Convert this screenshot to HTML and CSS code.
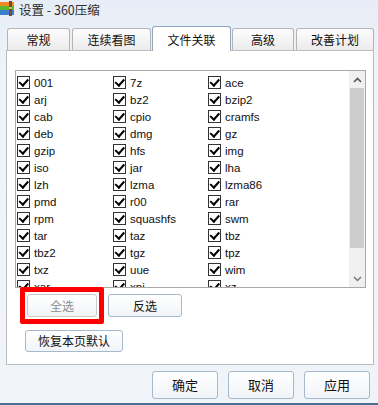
FILE: index.html
```html
<!DOCTYPE html>
<html lang="zh-CN">
<head>
    <meta charset="UTF-8">
    <title>设置 - 360压缩</title>
    <link rel="stylesheet" href="styles.css">
</head>
<body>
    <div class="window">
        <div class="titlebar">
            <svg class="app-icon" width="14" height="16" viewBox="0 0 14 16">
                <rect x="0" y="1" width="14" height="4" fill="#f08a24"/>
                <rect x="0" y="5" width="14" height="4" fill="#5cb82f"/>
                <rect x="0" y="9" width="14" height="5" fill="#3b7fd0"/>
                <rect x="9" y="0" width="3" height="15" fill="#7a4a22"/>
                <rect x="9" y="6" width="3" height="2" fill="#d9b36a"/>
            </svg>
            <span class="title">设置 - 360压缩</span>
        </div>

        <div class="tabs">
            <div class="tab w63">常规</div>
            <div class="tab w79">连续看图</div>
            <div class="tab w79 active">文件关联</div>
            <div class="tab w62">高级</div>
            <div class="tab w78">改善计划</div>
        </div>

        <div class="panel">
            <div class="listbox">
                <div class="items">
                    <label class="item"><span class="cb"></span>001</label>
                    <label class="item"><span class="cb"></span>7z</label>
                    <label class="item"><span class="cb"></span>ace</label>
                    <label class="item"><span class="cb"></span>arj</label>
                    <label class="item"><span class="cb"></span>bz2</label>
                    <label class="item"><span class="cb"></span>bzip2</label>
                    <label class="item"><span class="cb"></span>cab</label>
                    <label class="item"><span class="cb"></span>cpio</label>
                    <label class="item"><span class="cb"></span>cramfs</label>
                    <label class="item"><span class="cb"></span>deb</label>
                    <label class="item"><span class="cb"></span>dmg</label>
                    <label class="item"><span class="cb"></span>gz</label>
                    <label class="item"><span class="cb"></span>gzip</label>
                    <label class="item"><span class="cb"></span>hfs</label>
                    <label class="item"><span class="cb"></span>img</label>
                    <label class="item"><span class="cb"></span>iso</label>
                    <label class="item"><span class="cb"></span>jar</label>
                    <label class="item"><span class="cb"></span>lha</label>
                    <label class="item"><span class="cb"></span>lzh</label>
                    <label class="item"><span class="cb"></span>lzma</label>
                    <label class="item"><span class="cb"></span>lzma86</label>
                    <label class="item"><span class="cb"></span>pmd</label>
                    <label class="item"><span class="cb"></span>r00</label>
                    <label class="item"><span class="cb"></span>rar</label>
                    <label class="item"><span class="cb"></span>rpm</label>
                    <label class="item"><span class="cb"></span>squashfs</label>
                    <label class="item"><span class="cb"></span>swm</label>
                    <label class="item"><span class="cb"></span>tar</label>
                    <label class="item"><span class="cb"></span>taz</label>
                    <label class="item"><span class="cb"></span>tbz</label>
                    <label class="item"><span class="cb"></span>tbz2</label>
                    <label class="item"><span class="cb"></span>tgz</label>
                    <label class="item"><span class="cb"></span>tpz</label>
                    <label class="item"><span class="cb"></span>txz</label>
                    <label class="item"><span class="cb"></span>uue</label>
                    <label class="item"><span class="cb"></span>wim</label>
                    <label class="item"><span class="cb"></span>xar</label>
                    <label class="item"><span class="cb"></span>xpi</label>
                    <label class="item"><span class="cb"></span>xz</label>
                </div>
                <div class="scrollbar">
                    <div class="arrow">
                        <svg width="9" height="6" viewBox="0 0 9 6"><path d="M1 5 L4.5 1.5 L8 5" fill="none" stroke="#555" stroke-width="1.6"/></svg>
                    </div>
                    <div class="thumb"></div>
                    <div class="track"></div>
                    <div class="arrow">
                        <svg width="9" height="6" viewBox="0 0 9 6"><path d="M1 1 L4.5 4.5 L8 1" fill="none" stroke="#777" stroke-width="1.4"/></svg>
                    </div>
                </div>
            </div>

            <div class="btn-row">
                <span class="highlight">
                    <button class="btn select-all" disabled>全选</button>
                </span>
                <button class="btn invert">反选</button>
            </div>
            <button class="btn restore">恢复本页默认</button>
        </div>

        <div class="dialog-buttons">
            <button class="btn big">确定</button>
            <button class="btn big">取消</button>
            <button class="btn big">应用</button>
        </div>
        <div class="bottom-line"></div>
    </div>
</body>
</html>
```

FILE: styles.css
```css
* {
    box-sizing: border-box;
}
body {
    margin: 0;
    width: 378px;
    height: 405px;
    overflow: hidden;
    font-family: "Noto Sans CJK SC", sans-serif;
    font-size: 12px;
    color: #1a1a1a;
    background: #eef3f9;
}
.window {
    height: 405px;
    background: linear-gradient(#e6edf6, #eef3f9 60px, #f0f4f9);
}
.titlebar {
    height: 26px;
    display: flex;
    align-items: flex-start;
    padding-top: 1px;
}
.app-icon {
    flex: none;
}
.title {
    margin-left: 5px;
    line-height: 17px;
    color: #2b2b2b;
    font-size: 12.5px;
}
.tabs {
    height: 24px;
    padding-left: 7px;
    display: flex;
    align-items: flex-end;
}
.tab {
    height: 22px;
    border: 1px solid #b4b4b4;
    border-bottom: none;
    border-radius: 3px 3px 0 0;
    background: linear-gradient(#fdfdfd, #ebebeb);
    text-align: center;
    line-height: 21px;
    color: #111;
    margin-left: 2px;
}
.tab:first-child {
    margin-left: 0;
}
.tab.active,
.tab.active + .tab {
    margin-left: 1px;
}
.tab.active {
    height: 25px;
    margin-bottom: -1px;
    background: #fff;
    border-color: #8fa6c0;
    line-height: 25px;
    position: relative;
    z-index: 1;
}
.w62 { width: 62px; }
.w63 { width: 63px; }
.w78 { width: 78px; }
.w79 { width: 79px; }

.panel {
    margin-left: 6px;
    width: 368px;
    height: 315px;
    border: 1px solid #bcbcbc;
    background: #fff;
    padding: 19px 7px 0 8px;
}
.listbox {
    height: 218px;
    border: 1px solid #a9a9a9;
    display: flex;
    overflow: hidden;
}
.items {
    flex: 1;
    padding: 3px 0 0 1px;
    display: grid;
    grid-template-columns: 96px 95px 1fr;
    grid-auto-rows: 17px;
    overflow: hidden;
}
.item {
    display: flex;
    align-items: center;
    font-family: "Liberation Sans", Arial, sans-serif;
    font-size: 11.5px;
    color: #111;
}
.cb {
    width: 13px;
    height: 13px;
    border: 1px solid #333;
    background: #fff;
    margin-right: 4px;
    position: relative;
    flex: none;
}
.cb::after {
    content: "";
    position: absolute;
    left: 2px;
    top: 2px;
    width: 7px;
    height: 4px;
    border-left: 2.5px solid #000;
    border-bottom: 2.5px solid #000;
    transform: rotate(-48deg);
    transform-origin: 40% 60%;
}
.scrollbar {
    width: 16px;
    flex: none;
    background: #f0f0f0;
    display: flex;
    flex-direction: column;
}
.arrow {
    height: 17px;
    display: flex;
    align-items: center;
    justify-content: center;
}
.thumb {
    height: 160px;
    margin: 0 1px;
    background: #cdcdcd;
}
.track {
    flex: 1;
}

.btn {
    font-family: "Noto Sans CJK SC", sans-serif;
    font-size: 12px;
    color: #111;
    border: 1px solid #a7b9cd;
    border-radius: 3px;
    background: linear-gradient(#ffffff, #f1f4f8);
    padding: 0;
    line-height: 20px;
}
.btn-row {
    display: flex;
    align-items: center;
    margin-top: -1px;
    margin-left: 5px;
}
.highlight {
    display: flex;
    padding: 2px;
    border: 5px solid #f00;
    border-radius: 2px;
}
.select-all {
    width: 70px;
    height: 23px;
    color: #8d8d8d;
    border-color: #c9c9c9;
}
.invert {
    width: 74px;
    height: 23px;
    margin-left: 4px;
}
.restore {
    display: block;
    width: 98px;
    height: 22px;
    margin-top: 6px;
    margin-left: 10px;
}
.dialog-buttons {
    display: flex;
    justify-content: flex-end;
    gap: 10px;
    margin-top: 6px;
    padding-right: 8px;
}
.big {
    width: 66px;
    height: 28px;
    font-size: 13px;
}
.bottom-line {
    margin-top: 4px;
    height: 2px;
    background: #4a7096;
}
```
